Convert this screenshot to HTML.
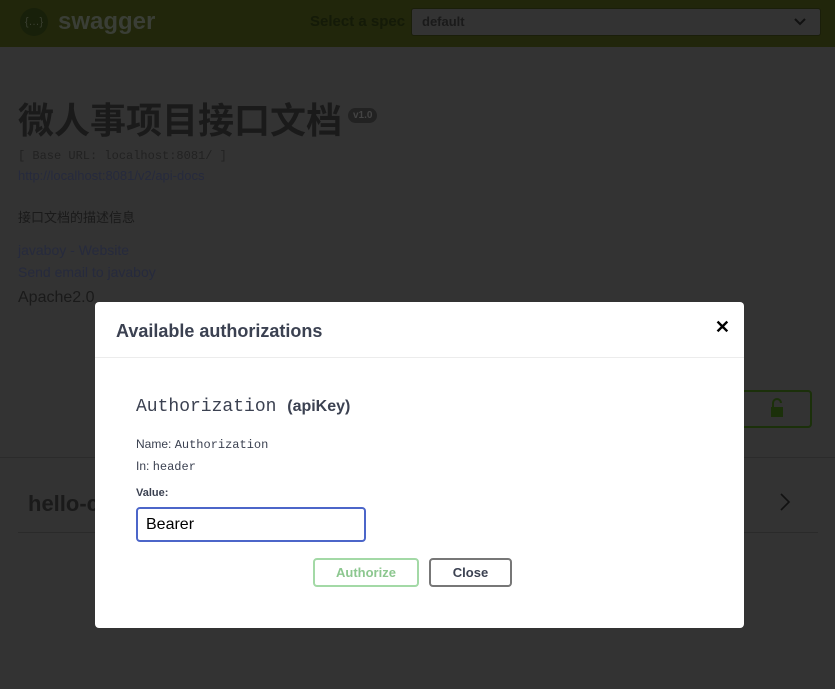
<!DOCTYPE html>
<html><head><meta charset="utf-8"><style>
body{margin:0;width:835px;height:689px;background:#333;position:relative;overflow:hidden;font-family:"Liberation Sans","Noto Sans CJK SC",sans-serif}
.hdr{position:absolute;left:0;top:0;width:835px;height:47px;background:#21260b}
.logo{position:absolute;left:20px;top:8px;width:28px;height:28px;border-radius:50%;background:#18200a;color:#3a3f30;font-size:11px;text-align:center;line-height:28px}
.sw{position:absolute;left:58px;top:8px;font-size:24px;font-weight:bold;color:#3a3e36}
.sel{position:absolute;left:310px;top:13px;font-size:15px;font-weight:bold;color:#141a08}
.box{position:absolute;left:411px;top:8px;width:408px;height:26px;background:#333;border-radius:3px;border:1px solid #1a1e0a}
.box span{position:absolute;left:10px;top:5px;font-size:13px;font-weight:bold;color:#1a1a1a}
.t{position:absolute;color:#1a1a1a}
a{color:#262a3d}
.modal{position:absolute;left:95px;top:302px;width:649px;height:326px;background:#fff;border-radius:4px}
.mh{height:55px;border-bottom:1px solid #ececec}
.mh b{position:absolute;left:21px;top:19px;font-size:18px;color:#3b4151}
.x{position:absolute;right:14px;top:15px;font-size:18px;font-weight:bold;color:#000}
.m{position:absolute;color:#3b4151}
input{position:absolute;left:41px;top:205px;border:2px solid #4c66c9;border-radius:4px;font-size:16px;padding:0 8px;font-family:"Liberation Sans",sans-serif;box-sizing:border-box;width:230px;height:35px}
.btn{position:absolute;top:256px;height:29px;border-radius:4px;font-size:13px;font-weight:bold;text-align:center;line-height:26px;box-sizing:border-box}
</style></head><body>
<div class="hdr"><div class="logo">{…}</div><div class="sw">swagger</div><div class="sel">Select a spec</div><div class="box"><span>default</span><svg style="position:absolute;left:382px;top:9px" width="12" height="8"><path d="M1 1l5 5 5-5" stroke="#111" stroke-width="2" fill="none"/></svg></div></div>
<div class="t" style="left:18px;top:97px;font-size:36px;font-weight:bold;line-height:48px">微人事项目接口文档</div>
<div style="position:absolute;left:348px;top:108px;background:#222;color:#444;font-size:10px;padding:2px 5px;border-radius:8px;font-weight:bold">v1.0</div>
<div class="t" style="left:18px;top:149px;font-size:12px;font-family:'Liberation Mono',monospace;color:#222">[ Base URL: localhost:8081/ ]</div>
<div class="t" style="left:18px;top:168px;font-size:13px"><a>http://localhost:8081/v2/api-docs</a></div>
<div class="t" style="left:18px;top:207px;font-size:13px">接口文档的描述信息</div>
<div class="t" style="left:18px;top:242px;font-size:14px"><a>javaboy - Website</a></div>
<div class="t" style="left:18px;top:264px;font-size:14px"><a>Send email to javaboy</a></div>
<div class="t" style="left:18px;top:289px;font-size:16px">Apache2.0</div>
<div style="position:absolute;left:700px;top:390px;width:108px;height:34px;border:2px solid #1b300a;border-radius:4px"></div>
<svg style="position:absolute;left:769px;top:397px" width="16" height="22"><path d="M4 10V6a4 4 0 0 1 8 0" stroke="#1b300a" stroke-width="2" fill="none"/><rect x="2" y="10" width="12" height="10" fill="#1b300a"/></svg>
<div style="position:absolute;left:0;top:457px;width:835px;height:1px;background:#2b2b2b"></div>
<div class="t" style="left:28px;top:491px;font-size:22px;font-weight:bold">hello-c</div>
<svg style="position:absolute;left:779px;top:492px" width="12" height="20"><path d="M2 2l8 8-8 8" stroke="#111" stroke-width="1.6" fill="none"/></svg>
<div style="position:absolute;left:18px;top:532px;width:800px;height:1px;background:#2a2a2a"></div>
<div class="modal">
<div class="mh"><b>Available authorizations</b><span class="x">✕</span></div>
<div class="m" style="left:41px;top:95px;font-size:18px;font-family:'Liberation Mono',monospace">Authorization <span style="font-family:'Liberation Sans';font-size:16px;font-weight:bold">(apiKey)</span></div>
<div class="m" style="left:41px;top:135px;font-size:12px">Name: <span style="font-family:'Liberation Mono',monospace">Authorization</span></div>
<div class="m" style="left:41px;top:157px;font-size:12px">In: <span style="font-family:'Liberation Mono',monospace">header</span></div>
<div class="m" style="left:41px;top:185px;font-size:11px;font-weight:bold">Value:</div>
<input value="Bearer">
<div class="btn" style="left:218px;width:106px;border:2px solid #a3d9a6;color:#8cc78f">Authorize</div>
<div class="btn" style="left:334px;width:83px;border:2px solid #777;color:#3b4151">Close</div>
</div>
</body></html>
